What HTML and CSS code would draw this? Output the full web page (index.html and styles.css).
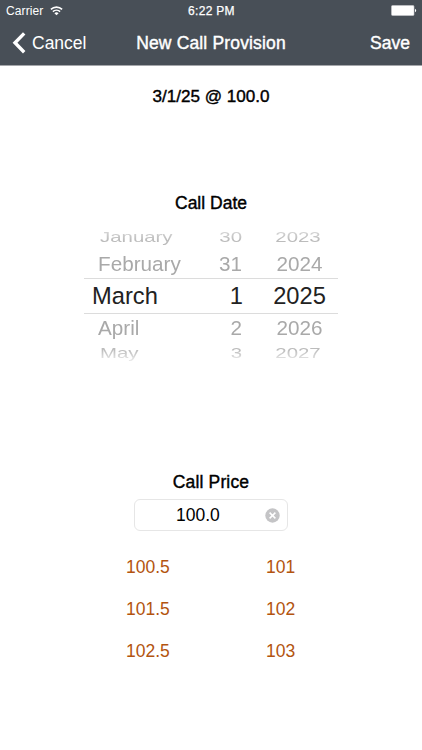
FILE: index.html
```html
<!DOCTYPE html>
<html lang="en">
<head>
<meta charset="UTF-8" />
<meta name="viewport" content="width=device-width, initial-scale=1" />
<title>New Call Provision</title>
<link rel="stylesheet" href="styles.css">
</head>
<body>

<header>
  <div class="status">
    <div class="carrier">
      <span>Carrier</span>
      <svg width="13" height="10" viewBox="0 0 13 10" fill="none" stroke="#fff" stroke-width="1.6">
        <path d="M.9 3.4a8 8 0 0 1 11.2 0" />
        <path d="M2.9 5.7a5.2 5.2 0 0 1 7.2 0" />
        <path d="M6.5 9.3 4.4 7.2a3 3 0 0 1 4.2 0z" fill="#fff" stroke="none" />
      </svg>
    </div>
    <span class="time">6:22 PM</span>
    <svg class="battery" width="26" height="11" viewBox="0 0 26 11">
      <rect x=".5" y=".5" width="22.5" height="10" rx="1" fill="#fff" stroke="#c9cbce" stroke-width=".6" />
      <path d="M24 3.7a2 2 0 0 1 0 3.6z" fill="#fff" />
    </svg>
  </div>
  <nav>
    <div class="cancel">
      <svg width="14" height="22" viewBox="0 0 14 22" fill="none" stroke="#fff" stroke-width="3.4">
        <path d="M12.2 1.4 3 10.8l9.2 9.4" />
      </svg>
      <span>Cancel</span>
    </div>
    <h1>New Call Provision</h1>
    <span class="save">Save</span>
  </nav>
</header>

<main>
  <h2 class="summary">3/1/25 @ 100.0</h2>

  <h2 class="date-title">Call Date</h2>
  <div class="picker">
    <div class="row far top"><span>January</span><span>30</span><span>2023</span></div>
    <div class="row near"><span>February</span><span>31</span><span>2024</span></div>
    <div class="row selected"><span>March</span><span>1</span><span>2025</span></div>
    <div class="row near after"><span>April</span><span>2</span><span>2026</span></div>
    <div class="row far bottom"><span>May</span><span>3</span><span>2027</span></div>
  </div>

  <h2 class="price-title">Call Price</h2>
  <div class="field">
    <span>100.0</span>
    <svg width="15" height="15" viewBox="0 0 15 15">
      <circle cx="7.5" cy="7.5" r="7.2" fill="#c4c4c6" />
      <path d="M4.6 4.6l5.8 5.8M10.4 4.6l-5.8 5.8" stroke="#fff" stroke-width="1.5" />
    </svg>
  </div>

  <div class="prices">
    <span>100.5</span><span>101</span>
    <span>101.5</span><span>102</span>
    <span>102.5</span><span>103</span>
  </div>
</main>

</body>
</html>
```

FILE: styles.css
```css
body {
  font-family: "Liberation Sans", Arial, sans-serif;
  font-size: 17.5px;
  background: #fff;
  color: #000;
  margin: 0;
  height: 750px;
  overflow: hidden;
}
svg {
  display: block;
}
h1, h2 {
  margin: 0;
  font-size: 17.5px;
  font-weight: normal;
  text-align: center;
  -webkit-text-stroke: 0.4px currentColor;
}
header {
  box-sizing: border-box;
  height: 66px;
  background: #484f57;
  border-bottom: 1px solid #a5a7ab;
  color: #fff;
}
.status {
  display: grid;
  grid-template-columns: 1fr auto 1fr;
  align-items: center;
  height: 21px;
  padding: 0 5px 0 6px;
  font-size: 12px;
}
.carrier {
  display: flex;
  align-items: center;
  gap: 7px;
  letter-spacing: 0.1px;
}
.time {
  letter-spacing: 0.3px;
  -webkit-text-stroke: 0.25px currentColor;
}
.battery {
  justify-self: end;
}
nav {
  display: grid;
  grid-template-columns: 1fr auto 1fr;
  align-items: center;
  height: 44px;
  padding: 0 12px;
}
.cancel {
  display: flex;
  align-items: center;
  gap: 6px;
}
nav h1 {
  letter-spacing: 0.16px;
}
.save {
  justify-self: end;
  -webkit-text-stroke: 0.4px currentColor;
}

/* Main content */
.summary {
  margin-top: 20px;
  line-height: 22px;
  font-size: 17.1px;
}
.date-title {
  margin-top: 84px;
  line-height: 22px;
}

/* Date picker */
.picker {
  width: 254px;
  margin: 11px auto 0 84px;
}
.row {
  display: grid;
  grid-template-columns: 98px 60px 96px;
  align-items: center;
}
.row span:nth-child(1) {
  padding-left: 14px;
}
.row span:nth-child(2) {
  text-align: right;
}
.row span:nth-child(3) {
  padding-left: 19px;
  text-align: center;
}
.row.selected {
  box-sizing: border-box;
  height: 36px;
  border-top: 1px solid #dcdcdc;
  border-bottom: 1px solid #dcdcdc;
  font-size: 23.7px;
  color: #222;
}
.row.selected span:first-child {
  padding-left: 8px;
}
.row.selected span:nth-child(2) {
  margin-right: -1px;
}
.near {
  height: 29px;
  font-size: 20.7px;
  color: #a9a9a9;
  transform: scaleY(0.95);
}
.near.after {
  height: 27px;
}
.far {
  height: 24px;
  line-height: 24px;
  font-size: 20.4px;
  color: #bcbcbc;
  transform: scaleY(0.68);
}
.far span:first-child {
  padding-left: 16px;
}
.far span:nth-child(3) {
  padding-left: 16px;
}
.far.top span {
  -webkit-mask-image: linear-gradient(to bottom, rgba(0,0,0,0.6) 15%, #000 70%);
}
.far.bottom span {
  -webkit-mask-image: linear-gradient(to top, rgba(0,0,0,0.3), #000 70%);
}

/* Price input */
.price-title {
  margin-top: 106px;
  line-height: 22px;
  letter-spacing: 0.15px;
}
.field {
  box-sizing: border-box;
  display: flex;
  align-items: center;
  justify-content: space-between;
  width: 154px;
  height: 32px;
  margin: 6px auto 0;
  padding: 0 7px 0 41px;
  border: 1px solid #e6e6e6;
  border-radius: 6px;
}
.prices {
  display: grid;
  grid-template-columns: 140px 140px;
  grid-auto-rows: 42px;
  align-items: center;
  margin: 15px 0 0 126px;
  color: #b3540f;
}
```
